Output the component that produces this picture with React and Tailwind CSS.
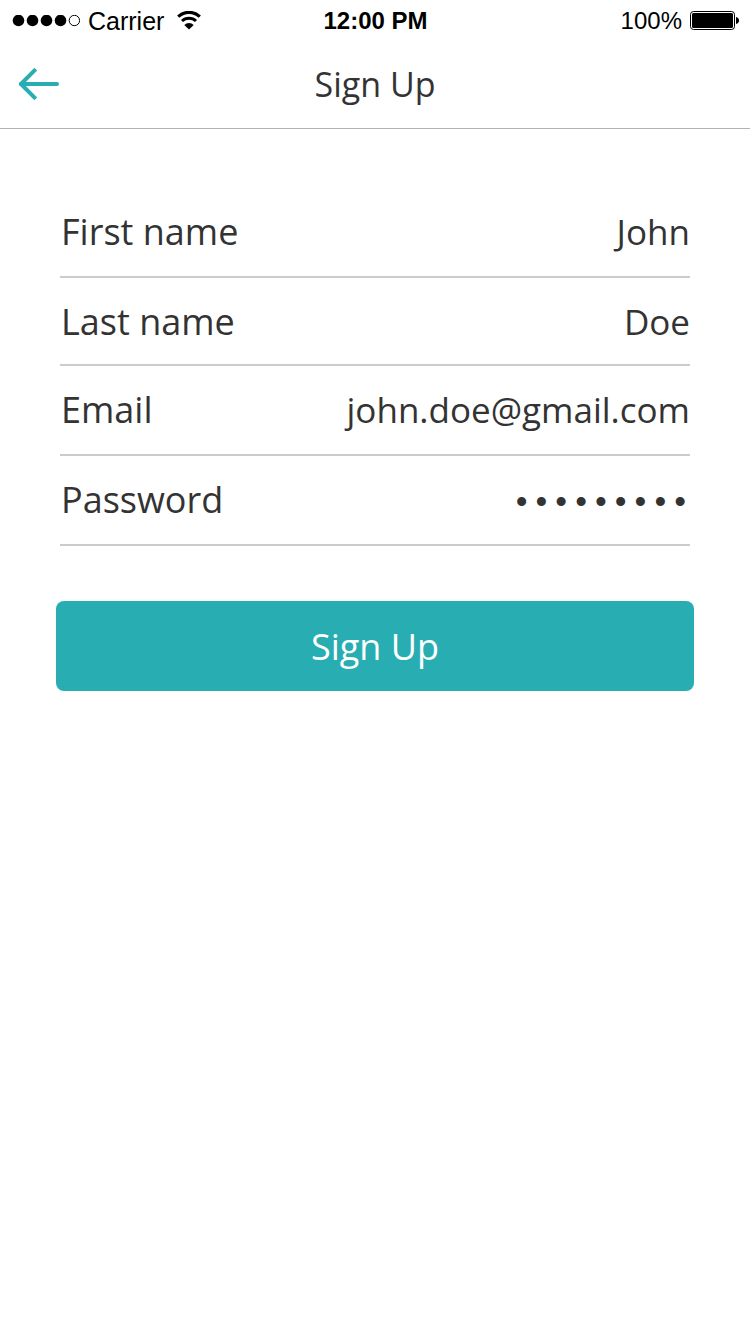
const fields = [
  { id: "first-name", label: "First name", type: "text", value: "John", height: "h-[90px]" },
  { id: "last-name", label: "Last name", type: "text", value: "Doe", height: "h-[88px]" },
  { id: "email", label: "Email", type: "email", value: "john.doe@gmail.com", height: "h-[90px]" },
  { id: "password", label: "Password", type: "password", value: "password1", height: "h-[90px]" },
];

function StatusBar() {
  return (
    <div className="grid h-10 grid-cols-3 items-center pl-3 pr-[11px] pt-0.5 font-['Liberation_Sans',Arial,sans-serif] text-2xl leading-8 text-black">
      <div className="flex items-center gap-2">
        <svg className="h-3 w-[68px]" viewBox="0 0 68 12" aria-hidden="true">
          <circle cx="6.5" cy="5.5" r="5.8" />
          <circle cx="20.5" cy="5.5" r="5.8" />
          <circle cx="34.5" cy="5.5" r="5.8" />
          <circle cx="48.5" cy="5.5" r="5.8" />
          <circle cx="62.4" cy="5.5" r="5.2" fill="none" stroke="#000" strokeWidth="1" />
        </svg>
        <span className="text-[25px]">Carrier</span>
        <svg className="ml-1 h-5 w-[26px]" viewBox="-1 0 26 20" fill="none" stroke="#000" aria-hidden="true">
          <path d="M1.2 5.6A15.8 15.8 0 0 1 22.8 5.6" strokeWidth="3.2" />
          <path d="M5 10A10.2 10.2 0 0 1 19 10" strokeWidth="3" />
          <path d="M12 18.6L7.3 13.9A6.6 6.6 0 0 1 16.7 13.9Z" fill="#000" stroke="none" />
        </svg>
      </div>
      <div className="text-center font-bold">12:00 PM</div>
      <div className="flex items-center justify-end gap-2">
        <span>100%</span>
        <svg className="h-5 w-[49px]" viewBox="0 0 49 20" aria-hidden="true">
          <rect x="0.5" y="0.5" width="44" height="18" rx="3" fill="none" stroke="#000" />
          <rect x="2" y="2" width="41" height="15" rx="1.5" />
          <path d="M46 6Q49 6.7 49 9.5T46 13Z" />
        </svg>
      </div>
    </div>
  );
}

function Header() {
  return (
    <header className="grid h-[89px] grid-cols-[1fr_auto_1fr] items-center border-b border-[#b2b2b2] px-[18px]">
      <button type="button" aria-label="Back" className="justify-self-start">
        <svg className="h-8 w-[42px]" viewBox="0 0 42 32" fill="none" stroke="#28aeb2" strokeWidth="4" aria-hidden="true">
          <path d="M17.8 1.2L3 16L17.8 30.8" strokeLinejoin="round" />
          <path d="M3 16H39" strokeLinecap="round" />
        </svg>
      </button>
      <h1 className="text-[34px] leading-[46px]">Sign Up</h1>
    </header>
  );
}

function Field({ id, label, type, value, height }) {
  const font = type === "password" ? "font-['Liberation_Mono',monospace] text-[33px]" : "text-[35px]";
  return (
    <div className={`flex items-baseline border-b-2 border-[#cccccc] pl-px pt-[19px] ${height}`}>
      <label htmlFor={id} className="text-4xl leading-[50px]">{label}</label>
      <input
        id={id}
        type={type}
        defaultValue={value}
        className={`min-w-0 flex-1 bg-transparent text-right leading-[50px] outline-none ${font}`}
      />
    </div>
  );
}

export default function App() {
  return (
    <div className="min-h-screen bg-white font-['Open_Sans',sans-serif] text-[#333333]">
      <StatusBar />
      <Header />
      <form className="px-14 pt-[59px]" onSubmit={(e) => e.preventDefault()}>
        <div className="px-1">
          {fields.map((f) => (
            <Field key={f.id} {...f} />
          ))}
        </div>
        <button type="submit" className="mt-[55px] h-[90px] w-full rounded-lg bg-[#28aeb2] pt-0.5 text-4xl text-white">
          Sign Up
        </button>
      </form>
    </div>
  );
}
